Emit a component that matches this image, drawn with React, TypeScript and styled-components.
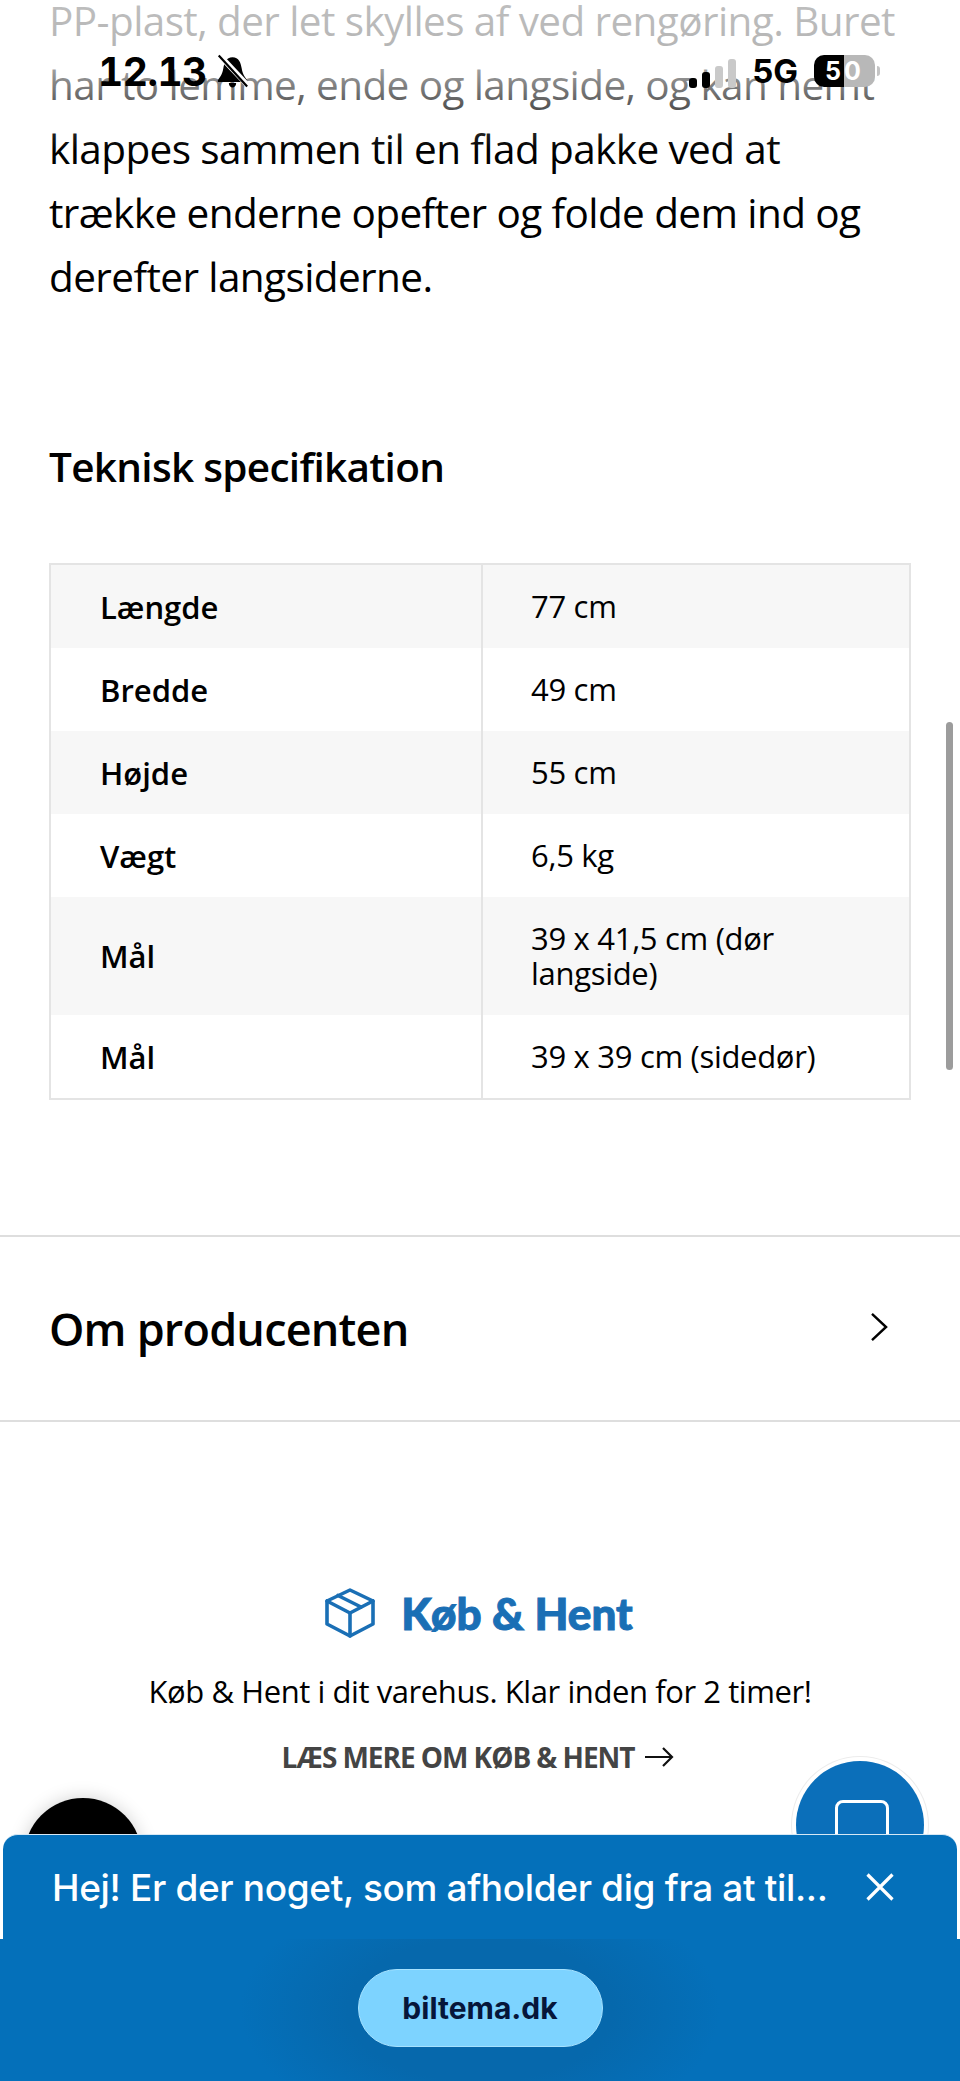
import styled, { createGlobalStyle } from "styled-components";

const GlobalStyle = createGlobalStyle`
    html, body {
        margin: 0;
        padding: 0;
        background: #ffffff;
    }
    body {
        font-family: "Open Sans", "Noto Sans", sans-serif;
        color: #000000;
    }
`

const Screen = styled.div`
    position: relative;
    width: 960px;
    height: 2081px;
    overflow: hidden;
    background: #ffffff;
`

const Content = styled.main`
    margin-top: -11px;
`

const Description = styled.p`
    margin: 0;
    padding: 0 58px 0 49px;
    font-size: 40.5px;
    line-height: 64px;
    letter-spacing: -0.6px;
`

const TopFade = styled.div`
    position: absolute;
    top: 0;
    left: 0;
    right: 0;
    height: 150px;
    background: linear-gradient(to bottom, rgba(255, 255, 255, 0.75) 0%, rgba(255, 255, 255, 0.7) 40%, rgba(255, 255, 255, 0.35) 70%, rgba(255, 255, 255, 0) 100%);
`

const StatusBar = styled.div`
    position: absolute;
    top: 52px;
    left: 98px;
    width: 777px;
    height: 38px;
    display: flex;
    align-items: center;
    color: #000000;
    font-family: "Inter", sans-serif;
`

const Clock = styled.span`
    font-size: 39px;
    font-weight: 700;
    letter-spacing: -0.5px;
    font-variant-numeric: tabular-nums;
`

const MuteIcon = styled.svg`
    width: 33px;
    height: 34px;
    margin-left: 9px;
    margin-right: auto;
`

const Signal = styled.div`
    display: flex;
    align-items: flex-end;
    gap: 5px;
    height: 30px;
    margin-top: 4px;
`

const SignalBar = styled.i<{ $height: number; $off?: boolean }>`
    display: block;
    width: 8px;
    height: ${(p) => p.$height}px;
    border-radius: 3px;
    background: ${(p) => (p.$off ? "#c9c9c9" : "#000000")};
`

const Network = styled.span`
    margin-left: 16px;
    font-size: 33px;
    font-weight: 700;
`

const Battery = styled.span`
    position: relative;
    width: 61px;
    height: 32px;
    margin-left: 16px;
    border-radius: 10px;
    background: linear-gradient(to right, #000000 0 30px, #b8b8b8 30px);
    color: #ffffff;
    font-size: 25px;
    font-weight: 700;
    line-height: 32px;
    letter-spacing: 3px;
    text-align: center;

    &::after {
        content: "";
        position: absolute;
        right: -5px;
        top: 11px;
        width: 3px;
        height: 10px;
        border-radius: 0 3px 3px 0;
        background: #c4c4c4;
    }
`

const SpecSection = styled.section`
    padding: 0 49px;
`

const SpecTitle = styled.h2`
    margin: 0;
    padding-top: 130px;
    font-size: 40.5px;
    line-height: 56px;
    font-weight: 600;
    letter-spacing: -0.7px;
`

const SpecTable = styled.table`
    width: 862px;
    margin-top: 68px;
    border: 2px solid #e4e4e4;
    border-collapse: collapse;
    table-layout: fixed;
`

const SpecRow = styled.tr<{ $shaded?: boolean }>`
    height: 83px;
    background: ${(p) => (p.$shaded ? "#f7f7f7" : "#ffffff")};
`

const SpecName = styled.th`
    width: 432px;
    box-sizing: border-box;
    padding: 0 48px 0 49px;
    border-right: 2px solid #e4e4e4;
    font-size: 31px;
    font-weight: 600;
    text-align: left;
`

const SpecValue = styled.td`
    padding: 24px 48px;
    font-size: 31px;
    line-height: 35px;
    letter-spacing: -0.3px;
`

const AccordionRow = styled.div`
    display: flex;
    align-items: center;
    justify-content: space-between;
    height: 183px;
    margin-top: 135px;
    padding: 0 71px 0 49px;
    border-top: 2px solid #dedede;
    border-bottom: 2px solid #dedede;
`

const AccordionTitle = styled.h2`
    margin: 0;
    font-size: 45px;
    font-weight: 600;
    letter-spacing: -0.8px;
`

const ChevronIcon = styled.svg`
    width: 19px;
    height: 30px;
    margin-bottom: 3px;
`

const PickupSection = styled.section`
    display: flex;
    flex-direction: column;
    align-items: center;
    padding-top: 161px;
`

const PickupHeading = styled.div`
    display: flex;
    align-items: center;
    gap: 25px;
    height: 60px;
    padding-right: 3px;
`

const PickupTitle = styled.h3`
    margin: 0;
    color: #1a6fb5;
    font-family: "Lato", sans-serif;
    font-size: 44px;
    font-weight: 900;
    -webkit-text-stroke: 1px #1a6fb5;
`

const PickupText = styled.p`
    margin: 26px 0 0;
    font-size: 31px;
    line-height: 44px;
    letter-spacing: -0.42px;
`

const PickupLink = styled.a`
    display: flex;
    align-items: center;
    gap: 11px;
    margin-top: 23px;
    padding-right: 4px;
    color: #444444;
    font-size: 28px;
    line-height: 42px;
    font-weight: 700;
    letter-spacing: -1.05px;
`

const Fab = styled.div<{ $dark?: boolean }>`
    position: absolute;
    border-radius: 50%;
    ${(p) =>
        p.$dark
            ? `left: 24px; top: 1798px; width: 118px; height: 118px; background: #000000; box-shadow: 0 0 18px rgba(0, 0, 0, 0.18);`
            : `left: 796px; top: 1761px; width: 128px; height: 128px; background: #0b6fba; box-shadow: 0 0 0 4px #ffffff, 0 0 0 5px #ececec;`}
`

const FabScreen = styled.div`
    position: absolute;
    left: 39px;
    top: 39px;
    width: 54px;
    height: 70px;
    box-sizing: border-box;
    border: 3px solid #ffffff;
    border-radius: 8px;
`

const ScrollThumb = styled.div`
    position: absolute;
    left: 946px;
    top: 722px;
    width: 7px;
    height: 348px;
    border-radius: 4px;
    background: #9c9c9c;
`

const Prompt = styled.div`
    position: absolute;
    left: 0;
    right: 0;
    bottom: 0;
    font-family: "Inter", "Roboto", sans-serif;
`

const PromptBar = styled.div`
    display: flex;
    align-items: center;
    justify-content: space-between;
    height: 105px;
    margin: 0 3px;
    padding: 0 63px 0 49px;
    border-top: 1px solid #d6e8f5;
    box-sizing: border-box;
    border-radius: 15px 15px 0 0;
    background: #0470ba;
    color: #ffffff;
`

const PromptText = styled.span`
    font-size: 37px;
    font-weight: 500;
    letter-spacing: -0.35px;
    white-space: nowrap;
`

const BrowserBar = styled.div`
    display: flex;
    justify-content: center;
    height: 142px;
    padding-top: 30px;
    box-sizing: border-box;
    background: radial-gradient(ellipse 240px 130px at 50% 50%, #0668ac 55%, #0470ba 100%);
`

const AddressPill = styled.div`
    display: flex;
    align-items: center;
    justify-content: center;
    width: 245px;
    height: 78px;
    box-sizing: border-box;
    border: 1px solid #a6e2ff;
    border-radius: 39px;
    background: #7dd3ff;
    color: #06163a;
    font-size: 30px;
    font-weight: 700;
`

const specs = [
    { name: "Længde", value: "77 cm" },
    { name: "Bredde", value: "49 cm" },
    { name: "Højde", value: "55 cm" },
    { name: "Vægt", value: "6,5 kg" },
    { name: "Mål", value: "39 x 41,5 cm (dør langside)" },
    { name: "Mål", value: "39 x 39 cm (sidedør)" },
];

function BoxIcon() {
    return (
        <svg width="52" height="50" viewBox="0 0 52 50" fill="none" stroke="#1a6fb5" strokeWidth="3.6" strokeLinejoin="round" strokeLinecap="round">
            <path d="M26 2 L49 13 V36 L26 48 L3 36 V13 Z" />
            <path d="M3 13 L26 25 L49 13" />
            <path d="M26 25 V48" />
            <path d="M14 7.5 L37 19" />
        </svg>
    )
}

function Chevron() {
    return (
        <ChevronIcon viewBox="0 0 20 32" fill="none" stroke="#000000" strokeWidth="2.6">
            <path d="M2 2 L17 16 L2 30" />
        </ChevronIcon>
    )
}

function ArrowRight() {
    return (
        <svg width="29" height="22" viewBox="0 0 29 22" fill="none" stroke="#111111" strokeWidth="2.2">
            <path d="M0 11 H27 M18 2 L27 11 L18 20" />
        </svg>
    )
}

function CloseIcon() {
    return (
        <svg width="28" height="28" viewBox="0 0 28 28" fill="none" stroke="#ffffff" strokeWidth="3.2">
            <path d="M1.5 1.5 L26.5 26.5 M26.5 1.5 L1.5 26.5" />
        </svg>
    )
}

export default function App() {
    return (
        <Screen>
            <GlobalStyle />
            <Content>
                <Description>
                    PP-plast, der let skylles af ved rengøring. Buret har to lemme, ende og langside, og kan nemt klappes sammen til en flad pakke ved at trække enderne opefter og folde dem ind og derefter langsiderne.
                </Description>

                <SpecSection>
                    <SpecTitle>Teknisk specifikation</SpecTitle>
                    <SpecTable>
                        <tbody>
                            {specs.map((spec, i) => (
                                <SpecRow key={i} $shaded={i % 2 === 0}>
                                    <SpecName>{spec.name}</SpecName>
                                    <SpecValue>{spec.value}</SpecValue>
                                </SpecRow>
                            ))}
                        </tbody>
                    </SpecTable>
                </SpecSection>

                <AccordionRow>
                    <AccordionTitle>Om producenten</AccordionTitle>
                    <Chevron />
                </AccordionRow>

                <PickupSection>
                    <PickupHeading>
                        <BoxIcon />
                        <PickupTitle>Køb &amp; Hent</PickupTitle>
                    </PickupHeading>
                    <PickupText>Køb &amp; Hent i dit varehus. Klar inden for 2 timer!</PickupText>
                    <PickupLink>
                        LÆS MERE OM KØB &amp; HENT
                        <ArrowRight />
                    </PickupLink>
                </PickupSection>
            </Content>

            <TopFade />
            <StatusBar>
                <Clock>12.13</Clock>
                <MuteIcon viewBox="0 0 36 36">
                    <path d="M18 3 C25 3 27 9 28 15 C29 21 31 24 34 28 V30 H2 V28 C5 24 7 21 8 15 C9 9 11 3 18 3 Z M14 31 H22 C22 34 20 36 18 36 C16 36 14 34 14 31 Z" fill="#000000" />
                    <path d="M3 0 L35 34" stroke="#ffffff" strokeWidth="6" />
                    <path d="M3 1 L34 35" stroke="#000000" strokeWidth="2.4" />
                </MuteIcon>
                <Signal>
                    <SignalBar $height={10} />
                    <SignalBar $height={16} />
                    <SignalBar $height={22} $off />
                    <SignalBar $height={29} $off />
                </Signal>
                <Network>5G</Network>
                <Battery>50</Battery>
            </StatusBar>

            <ScrollThumb />

            <Fab $dark />
            <Fab>
                <FabScreen />
            </Fab>

            <Prompt>
                <PromptBar>
                    <PromptText>Hej! Er der noget, som afholder dig fra at til...</PromptText>
                    <CloseIcon />
                </PromptBar>
                <BrowserBar>
                    <AddressPill>biltema.dk</AddressPill>
                </BrowserBar>
            </Prompt>
        </Screen>
    )
}
